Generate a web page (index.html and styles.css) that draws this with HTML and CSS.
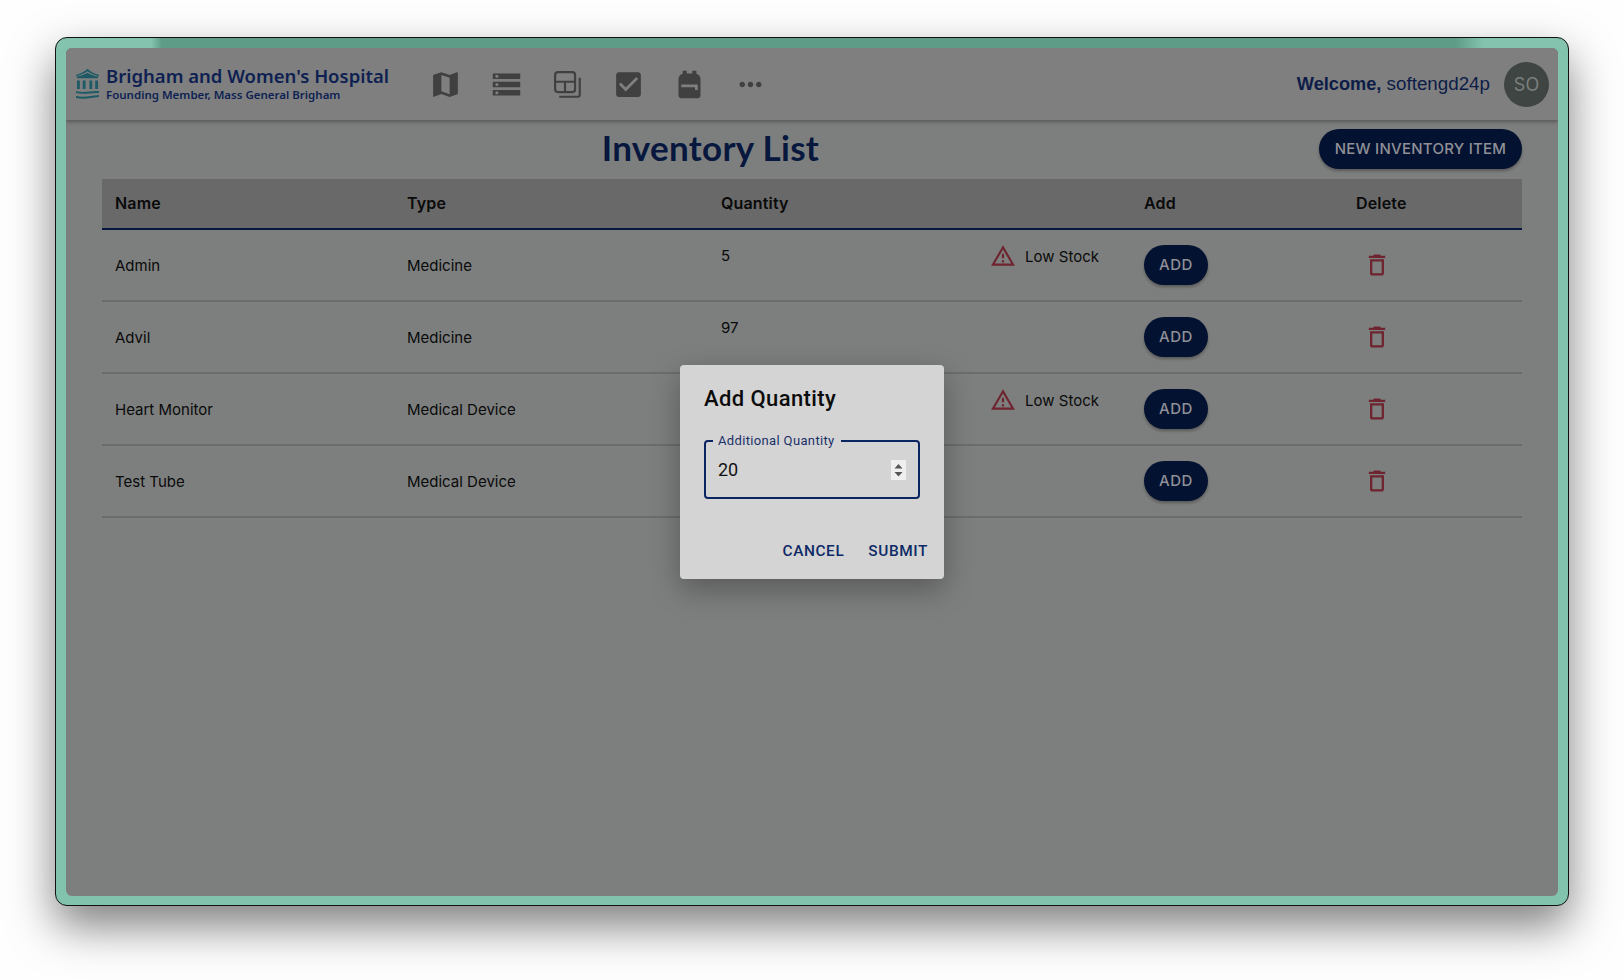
FILE: index.html
```html
<!DOCTYPE html>
<html lang="en">
<head>
    <meta charset="UTF-8">
    <meta name="viewport" content="width=device-width, initial-scale=1.0">
    <title>Inventory List</title>
    <link rel="stylesheet" href="styles.css">
</head>
<body>
    <div class="frame">
        <div class="app">
            <header class="navbar">
                <div class="brand">
                    <svg class="brand-icon" viewBox="0 0 24 32" width="23" height="32">
                        <path d="M0 6.500C5 5 9 3 12 0c3 3 7 5 12 6.500V8C19 6.700 15 5 12 2.800 9 5 5 6.700 0 8z"/>
                        <path d="M1 8.200C5 7.500 9 6 12 4.200 15 6 19 7.500 23 8.200V10H1z"/>
                        <path d="M1 12.300h3v9H1zM7 12.300h3v9H7zM14 12.300h3v9h-3zM20 12.300h3v9h-3z"/>
                        <path d="M0 23.500c8 2 16-.5 24 0v2c-8-.5-16 2-24 0zM0 28.500c8 2 16-.5 24-1v2c-8 .5-16 3-24 1z"/>
                    </svg>
                    <div class="brand-text">
                        <div class="brand-name">Brigham and Women's Hospital</div>
                        <div class="brand-sub">Founding Member, Mass General Brigham</div>
                    </div>
                </div>
                <nav class="nav-icons">
                    <svg viewBox="0 0 24 24"><path d="M20.500 3l-.16.03L15 5.100 9 3 3.360 4.900c-.21.07-.36.25-.36.48V20.500c0 .28.22.5.5.5l.16-.03L9 18.900l6 2.100 5.640-1.900c.21-.07.36-.25.36-.48V3.500c0-.28-.22-.5-.5-.5zM15 19l-6-2.110V5l6 2.110V19z"/></svg>
                    <svg viewBox="0 0 24 24"><path d="M2 20h20v-4H2v4zm2-3h2v2H4v-2zM2 4v4h20V4H2zm4 3H4V5h2v2zm-4 7h20v-4H2v4zm2-3h2v2H4v-2z"/></svg>
                    <svg class="icon-line" viewBox="0 0 24 24"><rect x="3" y="3" width="14.500" height="14.500" rx="2"/><path d="M3 10h14.500M10.200 10v7.500M20.900 7v12.900a1 1 0 0 1-1 1H6"/></svg>
                    <svg viewBox="0 0 24 24"><path d="M19 3H5c-1.110 0-2 .9-2 2v14c0 1.100.89 2 2 2h14c1.110 0 2-.9 2-2V5c0-1.100-.89-2-2-2zm-9 14-5-5 1.410-1.410L10 14.170l7.590-7.590L19 8l-9 9z"/></svg>
                    <svg viewBox="0 0 24 24"><path d="M20 8v12c0 1.100-.9 2-2 2H6c-1.100 0-2-.9-2-2V8c0-1.860 1.280-3.410 3-3.860V2h3v2h4V2h3v2.140c1.720.45 3 2 3 3.860zM6 12v2h10v2h2v-4H6z"/></svg>
                    <svg viewBox="0 0 24 24"><path d="M6 10c-1.100 0-2 .9-2 2s.9 2 2 2 2-.9 2-2-.9-2-2-2zm12 0c-1.100 0-2 .9-2 2s.9 2 2 2 2-.9 2-2-.9-2-2-2zm-6 0c-1.100 0-2 .9-2 2s.9 2 2 2 2-.9 2-2-.9-2-2-2z"/></svg>
                </nav>
                <div class="user">
                    <span class="welcome"><b>Welcome,</b> softengd24p</span>
                    <div class="avatar">SO</div>
                </div>
            </header>

            <main class="content">
                <div class="title-row">
                    <h1 class="title">Inventory List</h1>
                    <button class="btn-dark btn-new">NEW INVENTORY ITEM</button>
                </div>
                <table class="inventory">
                    <thead>
                        <tr>
                            <th class="col-name">Name</th>
                            <th class="col-type">Type</th>
                            <th class="col-qty">Quantity</th>
                            <th class="col-add">Add</th>
                            <th class="col-del">Delete</th>
                        </tr>
                    </thead>
                    <tbody>
                        <tr>
                            <td>Admin</td>
                            <td>Medicine</td>
                            <td>
                                <div class="qty-cell">
                                    <span class="qty-value">5</span>
                                    <span class="low-stock">
                                        <svg viewBox="0 0 24 24"><path d="M12 5.990 19.530 19H4.470L12 5.990M12 2 1 21h22L12 2zm1 14h-2v2h2v-2zm0-6h-2v4h2v-4z"/></svg>
                                        Low Stock
                                    </span>
                                </div>
                            </td>
                            <td><button class="btn-dark btn-add">ADD</button></td>
                            <td><svg class="trash" viewBox="0 0 24 24"><path d="M6 19c0 1.100.9 2 2 2h8c1.100 0 2-.9 2-2V7H6v12zM8 9h8v10H8V9zm7.500-5l-1-1h-5l-1 1H5v2h14V4h-3.500z"/></svg></td>
                        </tr>
                        <tr>
                            <td>Advil</td>
                            <td>Medicine</td>
                            <td>
                                <div class="qty-cell"><span class="qty-value">97</span></div>
                            </td>
                            <td><button class="btn-dark btn-add">ADD</button></td>
                            <td><svg class="trash" viewBox="0 0 24 24"><path d="M6 19c0 1.100.9 2 2 2h8c1.100 0 2-.9 2-2V7H6v12zM8 9h8v10H8V9zm7.500-5l-1-1h-5l-1 1H5v2h14V4h-3.500z"/></svg></td>
                        </tr>
                        <tr>
                            <td>Heart Monitor</td>
                            <td>Medical Device</td>
                            <td>
                                <div class="qty-cell">
                                    <span class="qty-value"></span>
                                    <span class="low-stock">
                                        <svg viewBox="0 0 24 24"><path d="M12 5.990 19.530 19H4.470L12 5.990M12 2 1 21h22L12 2zm1 14h-2v2h2v-2zm0-6h-2v4h2v-4z"/></svg>
                                        Low Stock
                                    </span>
                                </div>
                            </td>
                            <td><button class="btn-dark btn-add">ADD</button></td>
                            <td><svg class="trash" viewBox="0 0 24 24"><path d="M6 19c0 1.100.9 2 2 2h8c1.100 0 2-.9 2-2V7H6v12zM8 9h8v10H8V9zm7.500-5l-1-1h-5l-1 1H5v2h14V4h-3.500z"/></svg></td>
                        </tr>
                        <tr>
                            <td>Test Tube</td>
                            <td>Medical Device</td>
                            <td></td>
                            <td><button class="btn-dark btn-add">ADD</button></td>
                            <td><svg class="trash" viewBox="0 0 24 24"><path d="M6 19c0 1.100.9 2 2 2h8c1.100 0 2-.9 2-2V7H6v12zM8 9h8v10H8V9zm7.500-5l-1-1h-5l-1 1H5v2h14V4h-3.500z"/></svg></td>
                        </tr>
                    </tbody>
                </table>
            </main>

            <div class="overlay">
                <div class="dialog">
                    <h2 class="dialog-title">Add Quantity</h2>
                    <fieldset class="field">
                        <legend>Additional Quantity</legend>
                        <input class="field-input" type="text" value="20">
                        <span class="spinner">
                            <svg viewBox="0 0 15 20" width="15" height="20"><path d="M7.500 4 11.500 8.500h-8zM3.500 12h8l-4 4.500z"/></svg>
                        </span>
                    </fieldset>
                    <div class="dialog-actions">
                        <button class="btn-text">CANCEL</button>
                        <button class="btn-text">SUBMIT</button>
                    </div>
                </div>
            </div>
        </div>
    </div>
</body>
</html>
```

FILE: styles.css
```css
* {
    margin: 0;
    padding: 0;
    box-sizing: border-box;
}

body {
    width: 1624px;
    height: 980px;
    padding: 37px 55px;
    background-color: #fefefe;
    font-family: "Inter", "Liberation Sans", sans-serif;
    overflow: hidden;
}

.frame {
    width: 1514px;
    height: 869px;
    padding: 10px 10px 9px;
    background:
        linear-gradient(to right, #84c4ae 6.3%, #5f9c87 7%, #5f9c87 92.600%, #84c4ae 94.400%) top / 100% 10px no-repeat,
        #82c3ad;
    border: 1px solid #111;
    border-radius: 12px;
    box-shadow: 0 20px 45px rgba(0, 0, 0, 0.5);
}

.app {
    position: relative;
    height: 100%;
    background-color: #7d7f7e;
    border-radius: 6px;
    overflow: hidden;
}

/* navbar */
.navbar {
    display: flex;
    align-items: center;
    height: 72px;
    padding: 0 9px 0 10px;
    background-color: #7f7f7f;
    box-shadow: 0 2px 4px rgba(0, 0, 0, 0.3);
}

.brand {
    display: flex;
    align-items: center;
    gap: 7px;
    width: 353px;
}

.brand-icon {
    flex: none;
    fill: #1d5a66;
}

.brand-text {
    color: #0e1f52;
    font-family: "Noto Sans", sans-serif;
    white-space: nowrap;
}

.brand-name {
    padding-bottom: 1px;
    font-size: 18.500px;
    font-weight: 600;
    line-height: 20px;
}

.brand-sub {
    font-size: 11.500px;
    font-weight: 600;
    line-height: 15px;
}

.nav-icons {
    display: flex;
    gap: 28px;
}

.nav-icons svg {
    width: 33px;
    height: 33px;
    fill: #404040;
}

.nav-icons .icon-line {
    fill: none;
    stroke: #404040;
    stroke-width: 1.600;
}

.user {
    display: flex;
    align-items: center;
    gap: 14px;
    margin-left: auto;
}

.welcome {
    color: #0d1c47;
    font-family: "Liberation Sans", sans-serif;
    font-size: 18.800px;
}

.welcome b {
    font-size: 18.200px;
}

.avatar {
    display: flex;
    align-items: center;
    justify-content: center;
    width: 45px;
    height: 45px;
    color: #7b7f7e;
    background-color: #3f4543;
    border-radius: 50%;
    font-size: 18px;
}

/* page */
.content {
    padding: 9px 36px 0;
}

.title-row {
    display: flex;
    align-items: center;
    height: 40px;
    margin-bottom: 10px;
}

.title {
    flex: 1;
    padding-bottom: 4px;
    color: #07173d;
    font-family: "Lato", sans-serif;
    font-size: 35px;
    font-weight: 700;
    letter-spacing: 0.3px;
    text-align: center;
}

.btn-dark {
    padding-bottom: 2px;
    color: #8f9097;
    background-color: #041231;
    border: none;
    border-radius: 20px;
    box-shadow: 0 2px 3px rgba(0, 0, 0, 0.3);
    font-family: "Inter", sans-serif;
    font-size: 15px;
    font-weight: 500;
    letter-spacing: 0.25px;
}

.btn-new {
    width: 203px;
    height: 40px;
}

.btn-add {
    display: block;
    width: 64px;
    height: 40px;
    letter-spacing: 0.6px;
}

/* table */
.inventory {
    width: 100%;
    border-collapse: collapse;
    table-layout: fixed;
    color: #0a0a0a;
    font-size: 15px;
}

.inventory th {
    height: 50px;
    padding-left: 13px;
    padding-bottom: 2px;
    background-color: #696969;
    border-bottom: 2px solid #07173d;
    font-size: 16px;
    font-weight: 600;
    letter-spacing: 0.15px;
    text-align: left;
}

.inventory td {
    height: 72px;
    padding-left: 13px;
    border-bottom: 2px solid #6b6c6b;
}

.col-name { width: 292px; }
.col-type { width: 314px; }
.col-qty { width: 423px; }
.col-add { width: 212px; }
.col-del { width: 179px; }

.inventory td:last-child {
    padding-left: 0;
}

.qty-cell {
    display: flex;
    align-items: center;
    justify-content: space-between;
    height: 26px;
    margin-bottom: 18px;
    padding-right: 32px;
}

.qty-value {
    padding-bottom: 2px;
}

.low-stock {
    display: flex;
    align-items: center;
    gap: 9px;
}

.low-stock svg {
    width: 26px;
    height: 26px;
    fill: #6e2530;
}

.trash {
    display: block;
    width: 28px;
    height: 28px;
    margin-left: 20px;
    fill: #6e2530;
}

/* dialog */
.overlay {
    position: absolute;
    inset: 0;
    display: flex;
    align-items: center;
    justify-content: center;
}

.dialog {
    width: 264px;
    height: 214px;
    padding: 20px 16px 0 24px;
    background-color: #d4d4d4;
    border-radius: 4px;
    box-shadow: 0 10px 30px rgba(0, 0, 0, 0.3);
    font-family: "Roboto", sans-serif;
}

.dialog-title {
    color: #0c0c0c;
    font-size: 22px;
    font-weight: 500;
    letter-spacing: 0.4px;
    line-height: 28px;
}

.field {
    display: flex;
    align-items: center;
    width: 216px;
    height: 66px;
    margin-top: 20px;
    padding: 0 12px 6px;
    border: 2px solid #0b2561;
    border-radius: 4px;
}

.field legend {
    margin-left: -5px;
    padding: 0 6px 0 5px;
    color: #1b3068;
    font-size: 13px;
    letter-spacing: 0.35px;
}

.field-input {
    flex: 1;
    width: 100px;
    color: #111;
    background: none;
    border: none;
    font-family: "Roboto", sans-serif;
    font-size: 18px;
}

.spinner {
    display: block;
    width: 15px;
    height: 20px;
    background-color: #efefef;
}

.spinner svg {
    display: block;
    fill: #555;
}

.dialog-actions {
    display: flex;
    justify-content: flex-end;
    gap: 24px;
    margin-top: 43px;
}

.btn-text {
    color: #0e2a66;
    background: none;
    border: none;
    font-family: "Roboto", sans-serif;
    font-size: 15.400px;
    font-weight: 500;
    letter-spacing: 0.6px;
}
```
